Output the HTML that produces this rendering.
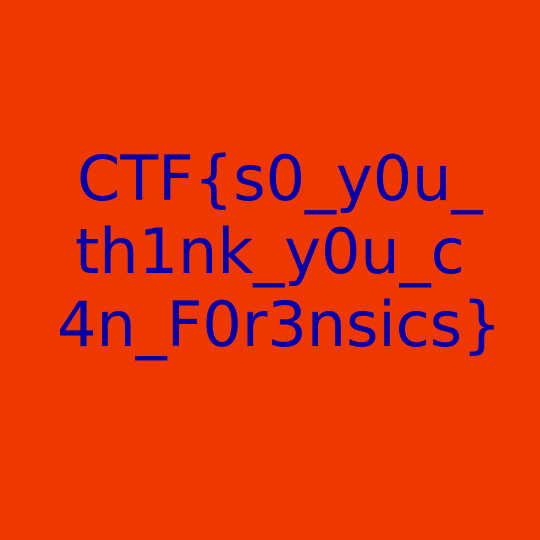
<!DOCTYPE html>
<html><head><style>
body{margin:0;width:540px;height:540px;background:#ee3800;overflow:hidden;position:relative}
div{position:absolute;font-family:"DejaVu Sans",sans-serif;font-size:62px;color:#0000aa;line-height:1;white-space:nowrap}
</style></head><body>
<div style="left:77px;top:148px">CTF{s0_y0u_</div>
<div style="left:75px;top:221px">th1nk_y0u_c</div>
<div style="left:57px;top:294px">4n_F0r3nsics}</div>
</body></html>
